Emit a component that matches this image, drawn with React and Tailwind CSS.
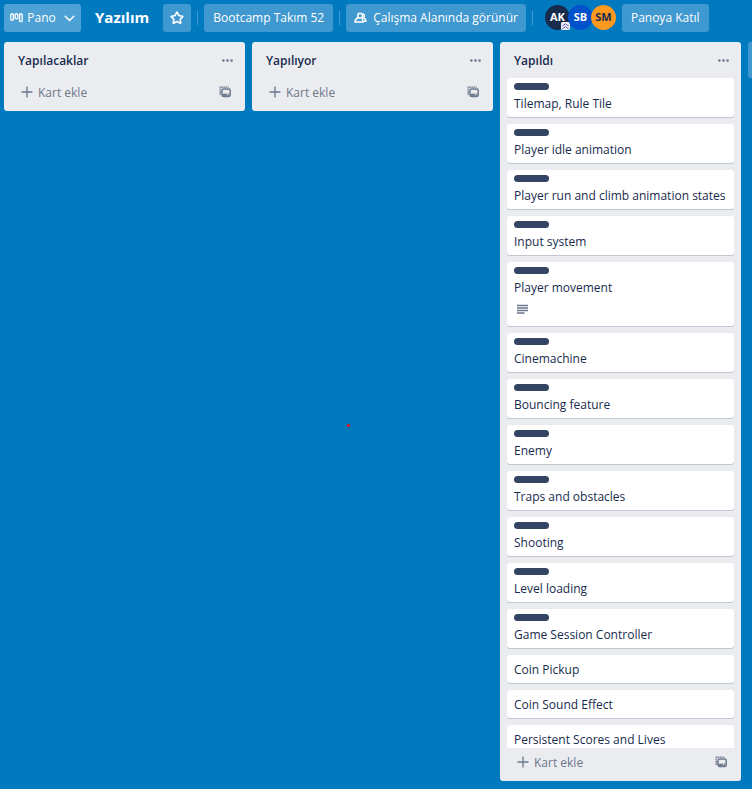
import { Star } from "lucide-react";

const doneCards = [
  { title: "Tilemap, Rule Tile", label: true },
  { title: "Player idle animation", label: true },
  { title: "Player run and climb animation states", label: true },
  { title: "Input system", label: true },
  { title: "Player movement", label: true, description: true },
  { title: "Cinemachine", label: true },
  { title: "Bouncing feature", label: true },
  { title: "Enemy", label: true },
  { title: "Traps and obstacles", label: true },
  { title: "Shooting", label: true },
  { title: "Level loading", label: true },
  { title: "Game Session Controller", label: true },
  { title: "Coin Pickup" },
  { title: "Coin Sound Effect" },
  { title: "Persistent Scores and Lives" },
];

const lists = [
  { title: "Yapılacaklar", cards: [] },
  { title: "Yapılıyor", cards: [] },
  { title: "Yapıldı", cards: doneCards },
];

function BoardIcon() {
  return (
    <svg width="13" height="10" viewBox="0 0 13 10" fill="none" stroke="currentColor" strokeWidth="1.3" aria-hidden="true">
      <rect x="0.8" y="1" width="2.6" height="6.2" rx="0.8" />
      <rect x="5.2" y="1" width="2.6" height="4.800" rx="0.8" />
      <rect x="9.6" y="1" width="2.6" height="7.600" rx="0.8" />
    </svg>
  );
}

function ChevronIcon() {
  return (
    <svg width="11" height="7" viewBox="0 0 11 7" fill="none" stroke="currentColor" strokeWidth="1.5" strokeLinecap="round" strokeLinejoin="round" aria-hidden="true">
      <path d="M1.2 1.2 5.5 5.5 9.8 1.2" />
    </svg>
  );
}

function PlusIcon() {
  return (
    <svg width="12" height="12" viewBox="0 0 12 12" stroke="currentColor" strokeWidth="1.3" strokeLinecap="round" aria-hidden="true">
      <path d="M6 1v10M1 6h10" />
    </svg>
  );
}

function PeopleIcon() {
  return (
    <svg width="13" height="12" viewBox="0 0 14 12" fill="none" stroke="currentColor" strokeWidth="1.6" strokeLinejoin="round" aria-hidden="true">
      <circle cx="6.6" cy="3.5" r="2.5" />
      <path d="M4.800 5.400C2.600 6.200 1.200 8 1 10.400h8.800C9.700 8.200 8.800 6.400 8 5.900" />
      <path d="M9 1.500a2.300 2.300 0 0 1 1.200 4.200C12 6.500 12.900 8 13 9.600h-2.800" />
    </svg>
  );
}

function TemplateIcon() {
  return (
    <svg width="12" height="12" viewBox="0 0 12 12" fill="none" stroke="currentColor" aria-hidden="true">
      <path d="M1.200 9V1.200H9.500" strokeWidth="1.300" strokeDasharray="1.700 0.500" />
      <rect x="3" y="3" width="8.200" height="7.400" rx="1.400" strokeWidth="1.500" />
      <path d="M3.500 8.800h7" strokeWidth="2.200" />
      <path d="M7.800 8.700h1.400" stroke="#ebecf0" strokeWidth="1" />
    </svg>
  );
}

function DescriptionIcon() {
  return (
    <svg width="11" height="10" viewBox="0 0 11 10" stroke="currentColor" strokeWidth="1.300" role="img" aria-label="Açıklama">
      <path d="M0 1.500h11M0 4h11M0 6.500h11M0 9h7.500" />
    </svg>
  );
}

function Divider() {
  return <span className="mx-[6px] h-[14px] w-px shrink-0 bg-white/25" />;
}

function HeaderButton({ className = "bg-[#3f98cf]", children, ...props }) {
  return (
    <button
      type="button"
      className={`flex h-7 shrink-0 items-center justify-center rounded-[3px] pt-px text-[12px] whitespace-nowrap text-white ${className}`}
      {...props}
    >
      {children}
    </button>
  );
}

function Avatar({ initials, className, admin }) {
  return (
    <span className={`relative flex size-[25px] items-center justify-center rounded-full text-[11px] font-bold ${className}`}>
      {initials}
      {admin && (
        <svg className="absolute right-0 bottom-0" width="9" height="8" viewBox="0 0 9 8" aria-hidden="true">
          <rect width="9" height="8" rx="1.500" fill="#eef0fa" />
          <path d="M1.300 4 4.500 1.900 7.700 4M1.300 6.800 4.500 4.700 7.700 6.800" fill="none" stroke="#5243aa" strokeWidth="0.900" />
        </svg>
      )}
    </span>
  );
}

function Card({ card }) {
  return (
    <li
      className={`shrink-0 rounded-[3px] bg-white px-[7px] pb-1 shadow-[0_1px_0_#c1c7d0] ${card.label ? "pt-[5px]" : "pt-[6px]"}`}
    >
      {card.label && <div className="mb-[5px] h-[7px] w-[35px] rounded-full bg-[#344563]" />}
      <p className="text-[12px] leading-[18px] whitespace-nowrap text-[#172b4d]">{card.title}</p>
      {card.description && (
        <div className="mt-[3px] mb-1 flex h-[18px] items-center px-[3px] text-[#6b778c]">
          <DescriptionIcon />
        </div>
      )}
    </li>
  );
}

function List({ list }) {
  return (
    <section className="flex max-h-full w-[241px] shrink-0 flex-col rounded-[3px] bg-[#ebecf0]">
      <header className="flex h-9 shrink-0 items-center justify-between pr-3 pl-[14px]">
        <h2 className="pt-[2px] text-[12px] font-semibold text-[#172b4d]">{list.title}</h2>
        <button type="button" aria-label="Liste işlemleri" className="text-[#6b778c]">
          <svg width="11" height="3" viewBox="0 0 11 3" fill="currentColor" aria-hidden="true">
            <circle cx="1.400" cy="1.500" r="1.300" />
            <circle cx="5.500" cy="1.500" r="1.300" />
            <circle cx="9.600" cy="1.500" r="1.300" />
          </svg>
        </button>
      </header>
      {list.cards.length > 0 && (
        <ul className="flex min-h-0 flex-col gap-[7px] overflow-hidden px-[7px]">
          {list.cards.map((card) => (
            <Card key={card.title} card={card} />
          ))}
        </ul>
      )}
      <footer className="flex h-[33px] shrink-0 items-start justify-between pt-1 pr-[14px] pl-[17px] text-[#6b778c]">
        <button type="button" className="flex h-5 items-center gap-[5px] text-[12px]">
          <PlusIcon />
          <span className="pt-[2px]">Kart ekle</span>
        </button>
        <button type="button" aria-label="Şablondan oluştur" className="flex h-5 items-center">
          <TemplateIcon />
        </button>
      </footer>
    </section>
  );
}

export default function App() {
  return (
    <div className="relative flex h-screen flex-col overflow-hidden bg-[#0079bf] font-['Open_Sans','Noto_Sans',sans-serif]">
      <nav className="flex h-[35px] shrink-0 items-center pl-1">
        <HeaderButton className="w-[77px] gap-1 bg-[#4da1d4]">
          <BoardIcon />
          <span className="mr-1">Pano</span>
          <ChevronIcon />
        </HeaderButton>
        <h1 className="px-[14px] text-[15px] font-bold text-white">Yazılım</h1>
        <HeaderButton className="w-7 bg-[#3f98cf]" aria-label="Panoya yıldız ekle">
          <Star size={14} strokeWidth={2.8} />
        </HeaderButton>
        <Divider />
        <HeaderButton className="bg-[#3f98cf] px-[9px]">Bootcamp Takım 52</HeaderButton>
        <Divider />
        <HeaderButton className="gap-[6px] bg-[#3f98cf] px-2">
          <PeopleIcon />
          Çalışma Alanında görünür
        </HeaderButton>
        <Divider />
        <div className="mx-[6px] flex shrink-0 -space-x-[2px]">
          <Avatar initials="AK" className="bg-[#172b4d] text-white" admin />
          <Avatar initials="SB" className="bg-[#0052cc] text-white" />
          <Avatar initials="SM" className="bg-[#ff991f] text-[#172b4d]" />
        </div>
        <HeaderButton className="bg-[#3f98cf] px-[9px]">Panoya Katıl</HeaderButton>
      </nav>
      <main className="flex min-h-0 flex-1 items-start gap-[7px] pt-[7px] pb-2 pl-1">
        {lists.map((list) => (
          <List key={list.title} list={list} />
        ))}
        <button type="button" aria-label="Başka liste ekle" className="h-9 w-[241px] shrink-0 rounded-[3px] bg-[#3f98cf]" />
      </main>
      <span className="absolute top-[424px] left-[347px] size-[3px] rounded-full bg-[#ff0000]" />
    </div>
  );
}
